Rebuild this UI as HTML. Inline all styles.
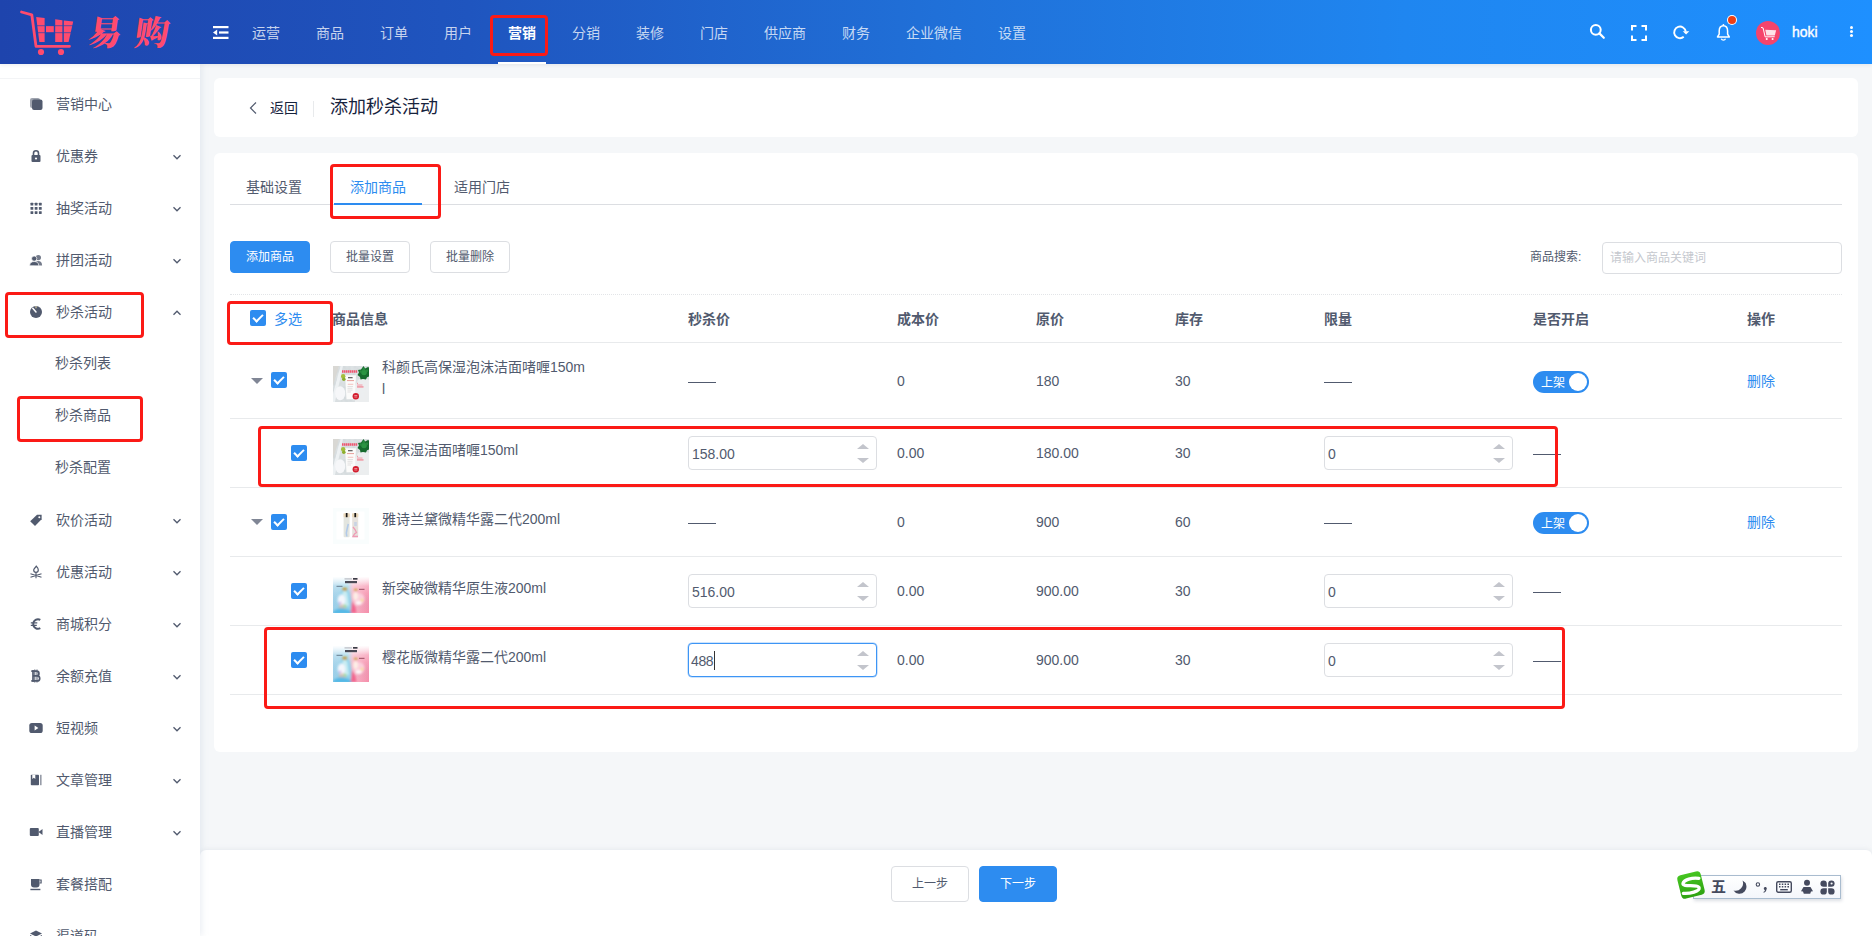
<!DOCTYPE html>
<html lang="zh-CN">
<head>
<meta charset="utf-8">
<title>添加秒杀活动</title>
<style>
*{box-sizing:border-box;margin:0;padding:0}
html,body{width:1872px;height:936px;overflow:hidden}
body{font-family:"Liberation Sans","Noto Sans CJK SC",sans-serif;font-size:14px;color:#515a6e;background:#f5f7f9;position:relative;line-height:1.5}
.abs{position:absolute}
/* header */
#hd{position:absolute;left:0;top:0;width:1872px;height:64px;background:linear-gradient(90deg,#1e44ad 0%,#1f55bf 25%,#2070d8 50%,#1f86f0 75%,#1e90ff 100%);z-index:5;box-shadow:0 1px 4px rgba(0,21,41,.08)}
#hd .nav{position:absolute;top:1px;height:64px;line-height:64px;color:rgba(255,255,255,.75);font-size:14px;white-space:nowrap}
#hd .nav.on{color:#fff;font-weight:bold}
/* sidebar */
#sb{position:absolute;left:0;top:64px;width:200px;height:872px;background:#fff;box-shadow:2px 0 6px rgba(180,190,210,.25);z-index:3}
#sb .it{position:absolute;left:0;width:200px;height:20px;line-height:20px;font-size:14px;color:#515a6e;white-space:nowrap}
#sb .it span{position:absolute;left:56px;top:0}
#sb .sub span{left:55px}
#sb .it svg.ic{position:absolute;left:29px;top:3px;width:14px;height:14px}
#sb .it svg.ch{position:absolute;left:172px;top:6px;width:10px;height:10px}
/* cards */
.card{position:absolute;background:#fff;border-radius:6px}
.rb{position:absolute;border:3px solid #fb1a16;border-radius:4px;z-index:8}
.btn{position:absolute;height:32px;line-height:30px;border:1px solid #dcdee2;border-radius:4px;font-size:12px;color:#515a6e;text-align:center;background:#fff}
.btn.pr{background:#2d8cf0;border-color:#2d8cf0;color:#fff}
.th{position:absolute;font-weight:bold;font-size:14px;color:#515a6e;height:20px;line-height:20px;white-space:nowrap}
.td{position:absolute;font-size:14px;color:#515a6e;height:20px;line-height:20px;white-space:nowrap}
.hl{position:absolute;left:230px;width:1612px;height:1px;background:#e8eaec}
.cb{position:absolute;width:16px;height:16px;border-radius:2px;background:#2d8cf0}
.cb:after{content:"";position:absolute;left:5px;top:2px;width:4px;height:8px;border:solid #fff;border-width:0 2px 2px 0;transform:rotate(45deg)}
.inp{position:absolute;width:189px;height:34px;border:1px solid #dcdee2;border-radius:4px;background:#fff;font-size:14px;line-height:34px;padding-left:3px;color:#515a6e}
.inp.f{padding-left:2px;letter-spacing:-.4px;border-color:#3d95f5;box-shadow:0 0 0 .5px rgba(61,149,245,.5)}
.inp i{position:absolute;right:7px;width:0;height:0;border-left:6px solid transparent;border-right:6px solid transparent}
.inp i.u{top:7px;border-bottom:5px solid #c3c5cc}
.inp i.d{bottom:6px;border-top:5px solid #c3c5cc}
.sw{position:absolute;width:56px;height:22px;border-radius:11px;background:#2d8cf0;color:#fff;font-size:12px;line-height:22px;padding:1px 0 0 8px}
.sw:after{content:"";position:absolute;right:2px;top:2px;width:18px;height:18px;border-radius:9px;background:#fff}
.tri{position:absolute;width:0;height:0;border-left:6px solid transparent;border-right:6px solid transparent;border-top:6px solid #808695}
.pim{position:absolute;width:36px;height:36px;overflow:hidden}
</style>
</head>
<body>
<!-- HEADER -->
<div id="hd">
<svg class="abs" style="left:16px;top:6px" width="64" height="54" viewBox="16 6 64 54">
<path d="M21.500 12 L31.800 14.800 L36 46.300 L69.500 46.300" fill="none" stroke="#ff4b6e" stroke-width="2.800" stroke-linecap="round" stroke-linejoin="round"/>
<path d="M36.200 17 L44.600 18 L44.600 42 L39.300 42 Z" fill="#ff4b6e"/>
<path d="M46 26 H53.800 V32.400 H46 Z" fill="#ff4b6e"/>
<path d="M55.200 19.300 L62.400 20.200 L62.400 42 L55.200 42 Z" fill="#ff4b6e"/>
<path d="M63.800 20.400 L73.200 21.600 L68.600 42 L63.800 42 Z" fill="#ff4b6e"/>
<path d="M36 25.700 H73 M36 32.700 H71" stroke="#2148b2" stroke-width=".7"/>
<circle cx="41" cy="52" r="3.100" fill="#ff4b6e"/><circle cx="61" cy="52" r="3.100" fill="#ff4b6e"/>
</svg>
<div class="abs" id="logo" style="left:88px;top:10px;height:48px;line-height:48px;font-size:34px;font-weight:900;color:#ff4b6e;letter-spacing:13px;font-family:'Liberation Serif','Noto Serif CJK SC',serif;transform:skewX(-8deg);white-space:nowrap">易购</div>
<svg class="abs" style="left:213px;top:25px" width="16" height="16" viewBox="0 0 16 16"><g fill="#fff"><rect x="0" y="1" width="15.5" height="2.2"/><rect x="6" y="6.4" width="9.5" height="2.2"/><rect x="0" y="11.8" width="15.5" height="2.2"/><path d="M0 7.5 L4.2 4.6 L4.2 10.4 Z"/></g></svg>
<div class="nav" style="left:252px">运营</div>
<div class="nav" style="left:316px">商品</div>
<div class="nav" style="left:380px">订单</div>
<div class="nav" style="left:444px">用户</div>
<div class="nav on" style="left:508px">营销</div>
<div class="nav" style="left:572px">分销</div>
<div class="nav" style="left:636px">装修</div>
<div class="nav" style="left:700px">门店</div>
<div class="nav" style="left:764px">供应商</div>
<div class="nav" style="left:842px">财务</div>
<div class="nav" style="left:906px">企业微信</div>
<div class="nav" style="left:998px">设置</div>
<div class="abs" style="left:498px;top:62px;width:48px;height:2px;background:#fff"></div>
<div class="rb" style="left:490px;top:15px;width:58px;height:41px"></div>
<svg class="abs" style="left:1589px;top:23px" width="17" height="17" viewBox="0 0 17 17"><circle cx="6.8" cy="6.8" r="4.9" fill="none" stroke="#fff" stroke-width="2"/><path d="M10.4 10.4 L14.8 14.8" stroke="#fff" stroke-width="2.2" stroke-linecap="round"/></svg>
<svg class="abs" style="left:1631px;top:25px" width="16" height="16" viewBox="0 0 16 16"><path d="M1 5.5V1H5.5 M10.5 1H15V5.5 M15 10.5V15H10.5 M5.5 15H1V10.5" fill="none" stroke="#fff" stroke-width="2"/></svg>
<svg class="abs" style="left:1672px;top:24px" width="18" height="18" viewBox="0 0 18 18"><path d="M11.730 12.840 A5.800 5.800 0 1 1 13.740 7.600" fill="none" stroke="#fff" stroke-width="1.900"/><path d="M10.700 7.200 L17.300 7.200 L14.100 10.400 Z" fill="#fff"/></svg>
<svg class="abs" style="left:1715px;top:23px" width="17" height="18" viewBox="0 0 17 18"><path d="M2.500 14 L4.200 11.200 L4.200 8 C4.200 4.600 6 2.700 8.400 2.700 C10.800 2.700 12.600 4.600 12.600 8 L12.600 11.200 L14.300 14 Z" fill="none" stroke="#fff" stroke-width="1.500" stroke-linejoin="round"/><circle cx="8.400" cy="1.900" r=".9" fill="#fff"/><path d="M6.300 15.700 A2.200 2 0 0 0 10.500 15.700" fill="none" stroke="#fff" stroke-width="1.200"/></svg>
<div class="abs" style="left:1728px;top:16px;width:8px;height:8px;border-radius:4px;background:#ed4014;box-shadow:0 0 0 1px #fff"></div>
<div class="abs" style="left:1756px;top:21px;width:24px;height:24px;border-radius:12px;background:#f5446c"></div>
<svg class="abs" style="left:1760px;top:26px" width="17" height="15" viewBox="0 0 58 50"><path d="M3.5 4.2 L10.5 5.8 L17.5 36.5 L50 36" fill="none" stroke="#fff" stroke-width="3.4"/><path d="M18 12 L55 14 L50.5 32 L22 32 Z" fill="#fff" opacity=".85"/><circle cx="23" cy="44" r="3.6" fill="#fff"/><circle cx="43" cy="44" r="3.6" fill="#fff"/></svg>
<div class="abs" style="left:1792px;top:22px;height:20px;line-height:20px;color:#fff;font-size:14px;-webkit-text-stroke:.35px #fff">hoki</div>
<div class="abs" style="left:1850px;top:26px;width:3px;height:3px;border-radius:2px;background:#fff;box-shadow:0 4px 0 #fff,0 8px 0 #fff"></div>
</div>
<!-- SIDEBAR -->
<div id="sb">
<div class="abs" style="left:0;top:14px;width:200px;height:1px;background:#f3f4f6"></div>
<div class="it" style="top:30px"><svg class="ic" viewBox="0 0 14 14"><rect x="1" y="1" width="10" height="10" rx="2" fill="#515a6e" opacity=".55"/><rect x="3" y="2.5" width="10.5" height="10.5" rx="2" fill="#515a6e"/></svg><span>营销中心</span></div>
<div class="it" style="top:82px"><svg class="ic" viewBox="0 0 14 14"><rect x="2.5" y="6" width="9" height="7" rx="1" fill="#515a6e"/><path d="M4.5 6.5V4.3a2.5 2.5 0 0 1 5 0V6.5" fill="none" stroke="#515a6e" stroke-width="1.6"/><circle cx="7" cy="9.5" r="1.1" fill="#fff"/></svg><span>优惠券</span><svg class="ch" viewBox="0 0 10 10"><path d="M1.500 3.200L5 6.800 8.500 3.200" fill="none" stroke="#515a6e" stroke-width="1.300"/></svg></div>
<div class="it" style="top:134px"><svg class="ic" viewBox="0 0 14 14"><rect x="1.5" y="1.8" width="2.8" height="2.8" rx=".4" fill="#515a6e"/><rect x="1.5" y="6.0" width="2.8" height="2.8" rx=".4" fill="#515a6e"/><rect x="1.5" y="10.200000000000001" width="2.8" height="2.8" rx=".4" fill="#515a6e"/><rect x="5.7" y="1.8" width="2.8" height="2.8" rx=".4" fill="#515a6e"/><rect x="5.7" y="6.0" width="2.8" height="2.8" rx=".4" fill="#515a6e"/><rect x="5.7" y="10.200000000000001" width="2.8" height="2.8" rx=".4" fill="#515a6e"/><rect x="9.9" y="1.8" width="2.8" height="2.8" rx=".4" fill="#515a6e"/><rect x="9.9" y="6.0" width="2.8" height="2.8" rx=".4" fill="#515a6e"/><rect x="9.9" y="10.200000000000001" width="2.8" height="2.8" rx=".4" fill="#515a6e"/></svg><span>抽奖活动</span><svg class="ch" viewBox="0 0 10 10"><path d="M1.500 3.200L5 6.800 8.500 3.200" fill="none" stroke="#515a6e" stroke-width="1.300"/></svg></div>
<div class="it" style="top:186px"><svg class="ic" viewBox="0 0 14 14"><circle cx="9.3" cy="4.6" r="2.7" fill="#515a6e" opacity=".8"/><path d="M5.5 12.5c0-3 1.6-4.4 3.8-4.4s3.8 1.4 3.8 4.4z" fill="#515a6e" opacity=".8"/><circle cx="5.2" cy="5.6" r="2.6" fill="#515a6e" stroke="#fff" stroke-width=".7"/><path d="M.6 12.8c0-3 2-4.3 4.6-4.3s4.6 1.300 4.600 4.300z" fill="#515a6e" stroke="#fff" stroke-width=".7"/></svg><span>拼团活动</span><svg class="ch" viewBox="0 0 10 10"><path d="M1.500 3.200L5 6.800 8.500 3.200" fill="none" stroke="#515a6e" stroke-width="1.300"/></svg></div>
<div class="it" style="top:238px"><svg class="ic" viewBox="0 0 14 14"><circle cx="7" cy="7" r="6" fill="#515a6e"/><path d="M7 7L3.800 3.300" stroke="#fff" stroke-width="1.5" stroke-linecap="round"/><path d="M7 1V3.300" stroke="#e8d9a8" stroke-width="1"/></svg><span>秒杀活动</span><svg class="ch" viewBox="0 0 10 10"><path d="M1.500 6.800L5 3.200 8.500 6.800" fill="none" stroke="#515a6e" stroke-width="1.300"/></svg></div>
<div class="it sub" style="top:289px"><span>秒杀列表</span></div>
<div class="it sub" style="top:341px"><span>秒杀商品</span></div>
<div class="it sub" style="top:393px"><span>秒杀配置</span></div>
<div class="it" style="top:446px"><svg class="ic" viewBox="0 0 14 14"><path d="M1.2 8.2L8 1.800h4.600v4.400L6 13z" fill="#515a6e"/><circle cx="10.300" cy="4.200" r="1" fill="#fff"/></svg><span>砍价活动</span><svg class="ch" viewBox="0 0 10 10"><path d="M1.500 3.200L5 6.800 8.500 3.200" fill="none" stroke="#515a6e" stroke-width="1.300"/></svg></div>
<div class="it" style="top:498px"><svg class="ic" viewBox="0 0 14 14"><path d="M7.300 1.200C8.800 2.800 9.300 4 9.300 5A2.300 2.300 0 0 1 4.700 5C4.700 3.800 5.800 3.500 7.300 1.200z" fill="none" stroke="#515a6e" stroke-width="1.200"/><path d="M1.500 8.800L12.500 12.300M12.500 8.800L1.500 12.300M7 7.500V13.300" stroke="#515a6e" stroke-width="1.100" fill="none"/></svg><span>优惠活动</span><svg class="ch" viewBox="0 0 10 10"><path d="M1.500 3.200L5 6.800 8.500 3.200" fill="none" stroke="#515a6e" stroke-width="1.300"/></svg></div>
<div class="it" style="top:550px"><svg class="ic" viewBox="0 0 14 14"><path d="M11.300 2.800A4.800 4.800 0 0 0 4.200 7a4.800 4.800 0 0 0 7.100 4.200" fill="none" stroke="#515a6e" stroke-width="2"/><path d="M1.800 5.800h6.500M1.800 8.400h6" stroke="#515a6e" stroke-width="1.300"/></svg><span>商城积分</span><svg class="ch" viewBox="0 0 10 10"><path d="M1.500 3.200L5 6.800 8.500 3.200" fill="none" stroke="#515a6e" stroke-width="1.300"/></svg></div>
<div class="it" style="top:602px"><svg class="ic" viewBox="0 0 14 14"><path d="M4 2.200h3.600a2.300 2.300 0 0 1 0 4.700H4zM4 6.900h4.200a2.500 2.500 0 0 1 0 5H4z" fill="none" stroke="#515a6e" stroke-width="1.700"/><path d="M5.800 .5v13M8 .5v13" stroke="#515a6e" stroke-width="1"/><path d="M2.300 2.200H5M2.300 11.900H5" stroke="#515a6e" stroke-width="1.700"/></svg><span>余额充值</span><svg class="ch" viewBox="0 0 10 10"><path d="M1.500 3.200L5 6.800 8.500 3.200" fill="none" stroke="#515a6e" stroke-width="1.300"/></svg></div>
<div class="it" style="top:654px"><svg class="ic" viewBox="0 0 14 14"><rect x=".3" y="2" width="13.400" height="10" rx="2.600" fill="#515a6e"/><path d="M5.600 4.600l3.800 2.400-3.800 2.400z" fill="#fff"/></svg><span>短视频</span><svg class="ch" viewBox="0 0 10 10"><path d="M1.500 3.200L5 6.800 8.500 3.200" fill="none" stroke="#515a6e" stroke-width="1.300"/></svg></div>
<div class="it" style="top:706px"><svg class="ic" viewBox="0 0 14 14"><rect x="1.800" y="1.800" width="8.200" height="10.400" rx=".8" fill="#515a6e"/><rect x="11" y="1.800" width="1.600" height="10.400" fill="#515a6e" opacity=".6"/><path d="M3.300 1.800h3v4.200l-1.500-1.200-1.500 1.200z" fill="#fff"/></svg><span>文章管理</span><svg class="ch" viewBox="0 0 10 10"><path d="M1.500 3.200L5 6.800 8.500 3.200" fill="none" stroke="#515a6e" stroke-width="1.300"/></svg></div>
<div class="it" style="top:758px"><svg class="ic" viewBox="0 0 14 14"><rect x=".8" y="3" width="9" height="8" rx="1" fill="#515a6e"/><path d="M9.500 7l4-3v6z" fill="#515a6e"/></svg><span>直播管理</span><svg class="ch" viewBox="0 0 10 10"><path d="M1.500 3.200L5 6.800 8.500 3.200" fill="none" stroke="#515a6e" stroke-width="1.300"/></svg></div>
<div class="it" style="top:810px"><svg class="ic" viewBox="0 0 14 14"><path d="M2 2h8.500v5.500a3 3 0 0 1-3 3h-2.500a3 3 0 0 1-3-3z" fill="#515a6e"/><path d="M10.500 3h1.600v3h-1.600" fill="none" stroke="#515a6e" stroke-width="1.200"/><rect x="1.400" y="11.800" width="10" height="1.400" fill="#515a6e"/></svg><span>套餐搭配</span></div>
<div class="it" style="top:862px"><svg class="ic" viewBox="0 0 14 14"><path d="M7 1.500l6 3-6 3-6-3z" fill="#515a6e"/><path d="M1 6l6 3 6-3v5l-6 3-6-3z" fill="#515a6e"/></svg><span>渠道码</span></div>
<div class="rb" style="left:5px;top:228px;width:139px;height:46px"></div>
<div class="rb" style="left:17px;top:332px;width:126px;height:46px"></div>
</div>
<!-- MAIN -->
<div id="main">
<div class="card" style="left:214px;top:78px;width:1644px;height:59px"></div>
<svg class="abs" style="left:248px;top:101px" width="10" height="14" viewBox="0 0 10 14"><path d="M8 1.500L2.500 7 8 12.500" fill="none" stroke="#515a6e" stroke-width="1.200"/></svg>
<div class="abs" style="left:270px;top:98px;height:20px;line-height:20px;font-size:14px;color:#17233d">返回</div>
<div class="abs" style="left:313px;top:101px;width:1px;height:16px;background:#e8eaec"></div>
<div class="abs" style="left:330px;top:94px;height:26px;line-height:26px;font-size:18px;color:#17233d;white-space:nowrap">添加秒杀活动</div>
<div class="card" style="left:214px;top:153px;width:1644px;height:599px"></div>
<div class="abs" style="left:246px;top:177px;height:20px;line-height:20px;font-size:14px;color:#515a6e;white-space:nowrap">基础设置</div>
<div class="abs" style="left:350px;top:177px;height:20px;line-height:20px;font-size:14px;color:#2d8cf0;white-space:nowrap">添加商品</div>
<div class="abs" style="left:454px;top:177px;height:20px;line-height:20px;font-size:14px;color:#515a6e;white-space:nowrap">适用门店</div>
<div class="abs" style="left:230px;top:204px;width:1612px;height:1px;background:#dcdee2"></div>
<div class="abs" style="left:334px;top:203px;width:88px;height:2px;background:#2d8cf0"></div>
<div class="rb" style="left:330px;top:164px;width:111px;height:55px"></div>
<div class="btn pr" style="left:230px;top:241px;width:80px">添加商品</div>
<div class="btn" style="left:330px;top:241px;width:80px">批量设置</div>
<div class="btn" style="left:430px;top:241px;width:80px">批量删除</div>
<div class="abs" style="left:1530px;top:247px;height:20px;line-height:20px;font-size:12px;color:#515a6e;white-space:nowrap">商品搜索:</div>
<div class="abs" style="left:1602px;top:242px;width:240px;height:32px;border:1px solid #dcdee2;border-radius:4px;background:#fff;font-size:12px;line-height:30px;padding-left:7px;color:#c5c8ce">请输入商品关键词</div>
<div class="abs" style="left:230px;top:294px;width:1612px;height:0;border-top:1px dotted #e3e5e8"></div>
<div class="cb" style="left:250px;top:310px"></div>
<div class="abs" style="left:274px;top:309px;height:20px;line-height:20px;font-size:14px;color:#2d8cf0">多选</div>
<div class="th" style="left:332px;top:309px">商品信息</div>
<div class="th" style="left:688px;top:309px">秒杀价</div>
<div class="th" style="left:897px;top:309px">成本价</div>
<div class="th" style="left:1036px;top:309px">原价</div>
<div class="th" style="left:1175px;top:309px">库存</div>
<div class="th" style="left:1324px;top:309px">限量</div>
<div class="th" style="left:1533px;top:309px">是否开启</div>
<div class="th" style="left:1747px;top:309px">操作</div>
<div class="rb" style="left:227px;top:301px;width:106px;height:44px"></div>
<div class="hl" style="top:342px"></div>
<div class="hl" style="top:418px"></div>
<div class="hl" style="top:487px"></div>
<div class="hl" style="top:556px"></div>
<div class="hl" style="top:625px"></div>
<div class="hl" style="top:694px"></div>
<div class="tri" style="left:251px;top:378px"></div>
<div class="cb" style="left:271px;top:372px"></div>
<div class="pim" style="left:333px;top:366px"><svg width="36" height="36" viewBox="0 0 36 36"><defs><filter id="b1a" x="-10%" y="-10%" width="120%" height="120%"><feGaussianBlur stdDeviation=".4"/></filter><filter id="n1a" x="0" y="0" width="100%" height="100%"><feTurbulence type="fractalNoise" baseFrequency=".22" numOctaves="2" seed="4"/><feColorMatrix values="0 0 0 0 .55  0 0 0 0 .6  0 0 0 0 .62  0 0 0 .9 -.28"/></filter></defs><rect width="36" height="36" fill="#dde2e4"/><rect width="36" height="36" filter="url(#n1a)"/><g filter="url(#b1a)"><path d="M0 0h6L0 20z" fill="#d9d8d4"/><path d="M7.500 0h2.500L2 36H0v-8z" fill="#f0f3f5" opacity=".9"/><path d="M22 36V20l3-6 5-3 6 3v22z" fill="#eef0f1" opacity=".92"/><ellipse cx="7.200" cy="27.300" rx="5" ry="7" fill="#f6f7f9"/><path d="M12 9.300h11l-1.300 24h-8.200z" fill="#fbfbfa"/><path d="M9 5.500h15.600" stroke="#f0546f" stroke-width="2.400" stroke-dasharray="1.500 .45"/><rect x="15" y="11" width="4.600" height="1.300" fill="#666"/><rect x="14" y="14" width="7" height="1.100" fill="#e9a7a2"/><rect x="14.800" y="17.800" width="5.500" height=".9" fill="#f3bdb8"/><path d="M14.500 20.500h5.500M14.500 22.300h5M14.500 24.100h5M14.500 26h3.500" stroke="#d9d6d6" stroke-width=".7"/><rect x="24" y="16.800" width="1" height="1" fill="#f08b98"/><rect x="24" y="18.500" width="5.500" height="1.100" fill="#f4a0ab"/><rect x="24" y="20.200" width="6.500" height="1.400" fill="#f18d9b"/><circle cx="10.200" cy="10.200" r="2.200" fill="#a4bf3d"/><circle cx="10.800" cy="13.200" r="1.800" fill="#8dae2e"/><path d="M30.500 0l1.500 2.500 3-1.500 1 .5v9l-2 .8-1 2.200-3-.5-2.500.5-.5-2.500-2.500-2 1.500-2.500-1-2.500 3-.5z" fill="#176b2d"/><circle cx="31" cy="6.500" r="2.800" fill="#2b9443"/><circle cx="30.800" cy="3" r="1.500" fill="#27893d"/><circle cx="33.800" cy="4.800" r="1.400" fill="#27893d"/><circle cx="27.800" cy="5.500" r="1.300" fill="#27893d"/><circle cx="22.800" cy="30.200" r="3.200" fill="#d31f2d"/><path d="M21.300 29.500h3M21.300 31h3" stroke="#f6b5ba" stroke-width=".7"/></g></svg></div>
<div class="td" style="left:382px;top:356px;width:204px;height:44px;line-height:22px;white-space:normal;word-break:break-all">科颜氏高保湿泡沫洁面啫喱150ml</div>
<div class="abs" style="left:688px;top:382px;width:28px;height:1px;background:#515a6e"></div>
<div class="td" style="left:897px;top:371px;">0</div>
<div class="td" style="left:1036px;top:371px;">180</div>
<div class="td" style="left:1175px;top:371px;">30</div>
<div class="abs" style="left:1324px;top:382px;width:28px;height:1px;background:#515a6e"></div>
<div class="sw" style="left:1533px;top:371px">上架</div>
<div class="td" style="left:1747px;top:371px;color:#2d8cf0">删除</div>
<div class="cb" style="left:291px;top:445px"></div>
<div class="pim" style="left:333px;top:439px"><svg width="36" height="36" viewBox="0 0 36 36"><defs><filter id="b1b" x="-10%" y="-10%" width="120%" height="120%"><feGaussianBlur stdDeviation=".4"/></filter><filter id="n1b" x="0" y="0" width="100%" height="100%"><feTurbulence type="fractalNoise" baseFrequency=".22" numOctaves="2" seed="4"/><feColorMatrix values="0 0 0 0 .55  0 0 0 0 .6  0 0 0 0 .62  0 0 0 .9 -.28"/></filter></defs><rect width="36" height="36" fill="#dde2e4"/><rect width="36" height="36" filter="url(#n1b)"/><g filter="url(#b1b)"><path d="M0 0h6L0 20z" fill="#d9d8d4"/><path d="M7.500 0h2.500L2 36H0v-8z" fill="#f0f3f5" opacity=".9"/><path d="M22 36V20l3-6 5-3 6 3v22z" fill="#eef0f1" opacity=".92"/><ellipse cx="7.200" cy="27.300" rx="5" ry="7" fill="#f6f7f9"/><path d="M12 9.300h11l-1.300 24h-8.200z" fill="#fbfbfa"/><path d="M9 5.500h15.600" stroke="#f0546f" stroke-width="2.400" stroke-dasharray="1.500 .45"/><rect x="15" y="11" width="4.600" height="1.300" fill="#666"/><rect x="14" y="14" width="7" height="1.100" fill="#e9a7a2"/><rect x="14.800" y="17.800" width="5.500" height=".9" fill="#f3bdb8"/><path d="M14.500 20.500h5.500M14.500 22.300h5M14.500 24.100h5M14.500 26h3.500" stroke="#d9d6d6" stroke-width=".7"/><rect x="24" y="16.800" width="1" height="1" fill="#f08b98"/><rect x="24" y="18.500" width="5.500" height="1.100" fill="#f4a0ab"/><rect x="24" y="20.200" width="6.500" height="1.400" fill="#f18d9b"/><circle cx="10.200" cy="10.200" r="2.200" fill="#a4bf3d"/><circle cx="10.800" cy="13.200" r="1.800" fill="#8dae2e"/><path d="M30.500 0l1.500 2.500 3-1.500 1 .5v9l-2 .8-1 2.200-3-.5-2.500.5-.5-2.500-2.500-2 1.500-2.500-1-2.500 3-.5z" fill="#176b2d"/><circle cx="31" cy="6.500" r="2.800" fill="#2b9443"/><circle cx="30.800" cy="3" r="1.500" fill="#27893d"/><circle cx="33.800" cy="4.800" r="1.400" fill="#27893d"/><circle cx="27.800" cy="5.500" r="1.300" fill="#27893d"/><circle cx="22.800" cy="30.200" r="3.200" fill="#d31f2d"/><path d="M21.300 29.500h3M21.300 31h3" stroke="#f6b5ba" stroke-width=".7"/></g></svg></div>
<div class="td" style="left:382px;top:440px;">高保湿洁面啫喱150ml</div>
<div class="inp" style="left:688px;top:436px">158.00<i class="u"></i><i class="d"></i></div>
<div class="td" style="left:897px;top:443px;">0.00</div>
<div class="td" style="left:1036px;top:443px;">180.00</div>
<div class="td" style="left:1175px;top:443px;">30</div>
<div class="inp" style="left:1324px;top:436px">0<i class="u"></i><i class="d"></i></div>
<div class="abs" style="left:1533px;top:454px;width:28px;height:1px;background:#515a6e"></div>
<div class="tri" style="left:251px;top:519px"></div>
<div class="cb" style="left:271px;top:514px"></div>
<div class="pim" style="left:333px;top:508px"><svg width="36" height="36" viewBox="0 0 36 36"><defs><filter id="b2"><feGaussianBlur stdDeviation=".35"/></filter></defs><rect width="36" height="36" fill="#f9fdfd"/><rect x="3.500" y="3.500" width="28" height="28" fill="#fff"/><g filter="url(#b2)"><rect x="10.600" y="8.500" width="6" height="20.800" rx="1" fill="#e3e5df"/><rect x="19.200" y="8.500" width="6" height="20.800" rx="1" fill="#e6e2dd"/><rect x="10.400" y="5.300" width="6.400" height="4" rx=".8" fill="#ead9bc"/><rect x="19" y="5.300" width="6.400" height="4" rx=".8" fill="#ead9bc"/><rect x="12.800" y="5" width="1.700" height="4.200" fill="#141414"/><rect x="21.400" y="5" width="1.700" height="4.200" fill="#141414"/><path d="M15.300 16l-1.200 5-.8 4 .5 3.500" stroke="#a9c6ea" stroke-width="1.600" opacity=".85" fill="none"/><path d="M20 19l2 2.500 1.500 3-2 1.500-1.500 2.500h5" stroke="#f08fae" stroke-width="1.300" opacity=".85" fill="none"/><rect x="21.200" y="14" width="2.600" height="4" fill="#c9d3e4"/></g></svg></div>
<div class="td" style="left:382px;top:509px;">雅诗兰黛微精华露二代200ml</div>
<div class="abs" style="left:688px;top:523px;width:28px;height:1px;background:#515a6e"></div>
<div class="td" style="left:897px;top:512px;">0</div>
<div class="td" style="left:1036px;top:512px;">900</div>
<div class="td" style="left:1175px;top:512px;">60</div>
<div class="abs" style="left:1324px;top:523px;width:28px;height:1px;background:#515a6e"></div>
<div class="sw" style="left:1533px;top:512px">上架</div>
<div class="td" style="left:1747px;top:512px;color:#2d8cf0">删除</div>
<div class="cb" style="left:291px;top:583px"></div>
<div class="pim" style="left:333px;top:577px"><svg width="36" height="36" viewBox="0 0 36 36"><defs><linearGradient id="g3a" x1="0" y1="0" x2="0" y2="1"><stop offset="0" stop-color="#dbe8f2"/><stop offset=".3" stop-color="#b9d6ea"/><stop offset="1" stop-color="#62bfe3"/></linearGradient><linearGradient id="g3b" x1="0" y1="0" x2="1" y2="1"><stop offset="0" stop-color="#fde3e9"/><stop offset=".35" stop-color="#fab5c6"/><stop offset="1" stop-color="#f47f9e"/></linearGradient><linearGradient id="g3h" x1="0" x2="1"><stop offset="0" stop-color="#9fcfe8"/><stop offset=".4" stop-color="#9ad5ea"/><stop offset=".56" stop-color="#f9b4c6"/><stop offset="1" stop-color="#f68fab"/></linearGradient><linearGradient id="g3v" x1="0" y1="0" x2="0" y2="1"><stop offset="0" stop-color="#fff" stop-opacity=".55"/><stop offset=".45" stop-color="#fff" stop-opacity=".12"/><stop offset="1" stop-color="#2aa0dc" stop-opacity=".0"/></linearGradient><linearGradient id="g3c" x1="0" y1="0" x2="0" y2="1"><stop offset="0" stop-color="#fff" stop-opacity=".95"/><stop offset="1" stop-color="#fff" stop-opacity="0"/></linearGradient><filter id="b3" x="-20%" y="-20%" width="140%" height="140%"><feGaussianBlur stdDeviation=".9"/></filter></defs><rect width="36" height="36" fill="url(#g3h)"/><rect width="36" height="36" fill="url(#g3v)"/><g filter="url(#b3)"><path d="M8 14c3-3 7-2 8.500 2l3.500 20H3z" fill="#8fd3ec"/><path d="M10 14c2-1 4 0 4.500 3l1.500 12h-9z" fill="#c9ecf2"/><ellipse cx="8.500" cy="23" rx="3.800" ry="5.500" fill="#f4f6fc"/><ellipse cx="9.500" cy="30" rx="4" ry="2.800" fill="#d8b9a8" opacity=".75"/><circle cx="12" cy="29" r="1.500" fill="#9fe0a0"/><circle cx="7" cy="26" r="1.300" fill="#c9a6e8"/><path d="M0 35c5-5 11-5 19 0v2H0z" fill="#57b9e6"/><ellipse cx="26" cy="22" rx="5.500" ry="6" fill="#fccfdc"/><ellipse cx="22.500" cy="19" rx="2.500" ry="4" fill="#fdeee6"/><path d="M19 24l3.500 6 1 6h-6z" fill="#f2668f"/><circle cx="29" cy="23" r="1.500" fill="#f6e08a"/><ellipse cx="25.500" cy="26" rx="3" ry="2" fill="#fff" opacity=".8"/><rect x="9.300" y="10.800" width="4.800" height="3" rx="1" fill="#c49a35"/><rect x="21" y="11.800" width="3.400" height="2.300" rx=".8" fill="#cfa845"/></g><rect width="36" height="9" fill="url(#g3c)"/><rect x="11.500" y="1.300" width="7.500" height="1.200" fill="#b9bcc4"/><rect x="20" y="1" width="4.500" height="1.700" fill="#3c3c46"/><rect x="12" y="4" width="12" height="2.200" fill="#4a4a55"/><rect x="3.500" y="8.800" width="6" height="1.100" fill="#6f8597"/><rect x="26" y="11.800" width="5.500" height="1.100" fill="#a4566b"/></svg></div>
<div class="td" style="left:382px;top:578px;">新突破微精华原生液200ml</div>
<div class="inp" style="left:688px;top:574px">516.00<i class="u"></i><i class="d"></i></div>
<div class="td" style="left:897px;top:581px;">0.00</div>
<div class="td" style="left:1036px;top:581px;">900.00</div>
<div class="td" style="left:1175px;top:581px;">30</div>
<div class="inp" style="left:1324px;top:574px">0<i class="u"></i><i class="d"></i></div>
<div class="abs" style="left:1533px;top:592px;width:28px;height:1px;background:#515a6e"></div>
<div class="cb" style="left:291px;top:652px"></div>
<div class="pim" style="left:333px;top:646px"><svg width="36" height="36" viewBox="0 0 36 36"><defs><linearGradient id="g4a" x1="0" y1="0" x2="0" y2="1"><stop offset="0" stop-color="#dbe8f2"/><stop offset=".3" stop-color="#b9d6ea"/><stop offset="1" stop-color="#62bfe3"/></linearGradient><linearGradient id="g4b" x1="0" y1="0" x2="1" y2="1"><stop offset="0" stop-color="#fde3e9"/><stop offset=".35" stop-color="#fab5c6"/><stop offset="1" stop-color="#f47f9e"/></linearGradient><linearGradient id="g4h" x1="0" x2="1"><stop offset="0" stop-color="#9fcfe8"/><stop offset=".4" stop-color="#9ad5ea"/><stop offset=".56" stop-color="#f9b4c6"/><stop offset="1" stop-color="#f68fab"/></linearGradient><linearGradient id="g4v" x1="0" y1="0" x2="0" y2="1"><stop offset="0" stop-color="#fff" stop-opacity=".55"/><stop offset=".45" stop-color="#fff" stop-opacity=".12"/><stop offset="1" stop-color="#2aa0dc" stop-opacity=".0"/></linearGradient><linearGradient id="g4c" x1="0" y1="0" x2="0" y2="1"><stop offset="0" stop-color="#fff" stop-opacity=".95"/><stop offset="1" stop-color="#fff" stop-opacity="0"/></linearGradient><filter id="b4" x="-20%" y="-20%" width="140%" height="140%"><feGaussianBlur stdDeviation=".9"/></filter></defs><rect width="36" height="36" fill="url(#g4h)"/><rect width="36" height="36" fill="url(#g4v)"/><g filter="url(#b4)"><path d="M8 14c3-3 7-2 8.500 2l3.500 20H3z" fill="#8fd3ec"/><path d="M10 14c2-1 4 0 4.500 3l1.500 12h-9z" fill="#c9ecf2"/><ellipse cx="8.500" cy="23" rx="3.800" ry="5.500" fill="#f4f6fc"/><ellipse cx="9.500" cy="30" rx="4" ry="2.800" fill="#d8b9a8" opacity=".75"/><circle cx="12" cy="29" r="1.500" fill="#9fe0a0"/><circle cx="7" cy="26" r="1.300" fill="#c9a6e8"/><path d="M0 35c5-5 11-5 19 0v2H0z" fill="#57b9e6"/><ellipse cx="26" cy="22" rx="5.500" ry="6" fill="#fccfdc"/><ellipse cx="22.500" cy="19" rx="2.500" ry="4" fill="#fdeee6"/><path d="M19 24l3.500 6 1 6h-6z" fill="#f2668f"/><circle cx="29" cy="23" r="1.500" fill="#f6e08a"/><ellipse cx="25.500" cy="26" rx="3" ry="2" fill="#fff" opacity=".8"/><rect x="9.300" y="10.800" width="4.800" height="3" rx="1" fill="#c49a35"/><rect x="21" y="11.800" width="3.400" height="2.300" rx=".8" fill="#cfa845"/></g><rect width="36" height="9" fill="url(#g4c)"/><rect x="11.500" y="1.300" width="7.500" height="1.200" fill="#b9bcc4"/><rect x="20" y="1" width="4.500" height="1.700" fill="#3c3c46"/><rect x="12" y="4" width="12" height="2.200" fill="#4a4a55"/><rect x="3.500" y="8.800" width="6" height="1.100" fill="#6f8597"/><rect x="26" y="11.800" width="5.500" height="1.100" fill="#a4566b"/></svg></div>
<div class="td" style="left:382px;top:647px;">樱花版微精华露二代200ml</div>
<div class="inp f" style="left:688px;top:643px">488<b style="position:absolute;left:24.5px;top:7px;width:1px;height:19px;background:#333"></b><i class="u"></i><i class="d"></i></div>
<div class="td" style="left:897px;top:650px;">0.00</div>
<div class="td" style="left:1036px;top:650px;">900.00</div>
<div class="td" style="left:1175px;top:650px;">30</div>
<div class="inp" style="left:1324px;top:643px">0<i class="u"></i><i class="d"></i></div>
<div class="abs" style="left:1533px;top:661px;width:28px;height:1px;background:#515a6e"></div>
<div class="rb" style="left:258px;top:426px;width:1300px;height:61px"></div>
<div class="rb" style="left:264px;top:627px;width:1301px;height:82px"></div>
<div class="abs" style="left:200px;top:850px;width:1672px;height:86px;background:#fff;border-radius:6px 6px 0 0;box-shadow:0 -1px 4px rgba(200,205,215,.3);z-index:2"></div>
<div class="btn" style="left:891px;top:866px;width:78px;height:36px;line-height:34px;z-index:4">上一步</div>
<div class="btn pr" style="left:979px;top:866px;width:78px;height:36px;line-height:34px;z-index:4">下一步</div>
<div class="abs" style="left:1693px;top:875px;width:148px;height:24px;border:1px solid #a9bccf;background:linear-gradient(#fff,#f4f6fb);box-shadow:1px 2px 3px rgba(120,130,150,.25);z-index:6"></div>
<div class="abs" style="left:1679px;top:873px;width:24px;height:24px;border-radius:4px;background:linear-gradient(#45c520,#2fa313);transform:rotate(-14deg);z-index:7"></div>
<svg class="abs" style="left:1677px;top:872px;z-index:7" width="28" height="27" viewBox="0 0 28 27"><path d="M22.500 7.200C16 5.500 7.500 7 6.200 10.600 5 14.500 21.500 12.800 21.800 16.800 22 20 12 21.800 5.500 20.500" fill="none" stroke="#fff" stroke-width="3.300" stroke-linecap="round" transform="rotate(-6 14 13)"/></svg>
<div class="abs" style="left:1711px;top:876px;height:22px;line-height:22px;font-size:15px;font-weight:bold;color:#454a5e;z-index:7">五</div>
<svg class="abs" style="left:1733px;top:880px;z-index:7" width="15" height="15" viewBox="0 0 15 15"><path d="M9.500 .5A7 7 0 1 1 .5 10.500 7.500 7.500 0 0 0 9.500 .5z" fill="#454a5e"/></svg>
<svg class="abs" style="left:1755px;top:880px;z-index:7" width="14" height="15" viewBox="0 0 14 15"><circle cx="2.900" cy="4.500" r="1.700" fill="none" stroke="#454a5e" stroke-width="1.100"/><path d="M8.800 8.500a1.500 1.500 0 1 1 2.600 1c0 1.600-1 2.700-2.700 3.200l-.3-.8c1-.4 1.500-1 1.500-1.900-.7-.1-1.100-.7-1.100-1.500z" fill="#454a5e"/></svg>
<svg class="abs" style="left:1776px;top:880px;z-index:7" width="16" height="14" viewBox="0 0 16 14"><rect x=".7" y="1.700" width="14.600" height="10.600" rx="1.500" fill="none" stroke="#454a5e" stroke-width="1.400"/><path d="M3 4.300h1.500M5.800 4.300h1.500M8.600 4.300h1.500M11.400 4.300h1.600M3 6.800h1.500M5.800 6.800h1.500M8.600 6.800h1.500M11.400 6.800h1.600" stroke="#454a5e" stroke-width="1.400"/><path d="M4.200 9.700h7.600" stroke="#454a5e" stroke-width="1.400"/></svg>
<svg class="abs" style="left:1800px;top:879px;z-index:7" width="14" height="16" viewBox="0 0 14 16"><circle cx="7" cy="3.800" r="3" fill="#454a5e"/><path d="M3.500 8h7l2.500 4.300-2 .2-.8 2.300H3.800L3 12.500l-2-.2z" fill="#454a5e"/></svg>
<svg class="abs" style="left:1820px;top:880px;z-index:7" width="15" height="15" viewBox="0 0 15 15"><g fill="#454a5e"><path d="M6.800 6.800H3.600A3.200 3.200 0 1 1 6.800 3.600z"/><path d="M8.200 6.800V3.600A3.200 3.200 0 1 1 11.400 6.800z"/><path d="M6.800 8.200V11.400A3.200 3.200 0 1 1 3.600 8.200z"/><path d="M8.200 8.200H11.400A3.200 3.200 0 1 1 8.200 11.400z"/></g><circle cx="11.600" cy="3.500" r="1.100" fill="#f9fafc"/></svg>
</div>
</body>
</html>
